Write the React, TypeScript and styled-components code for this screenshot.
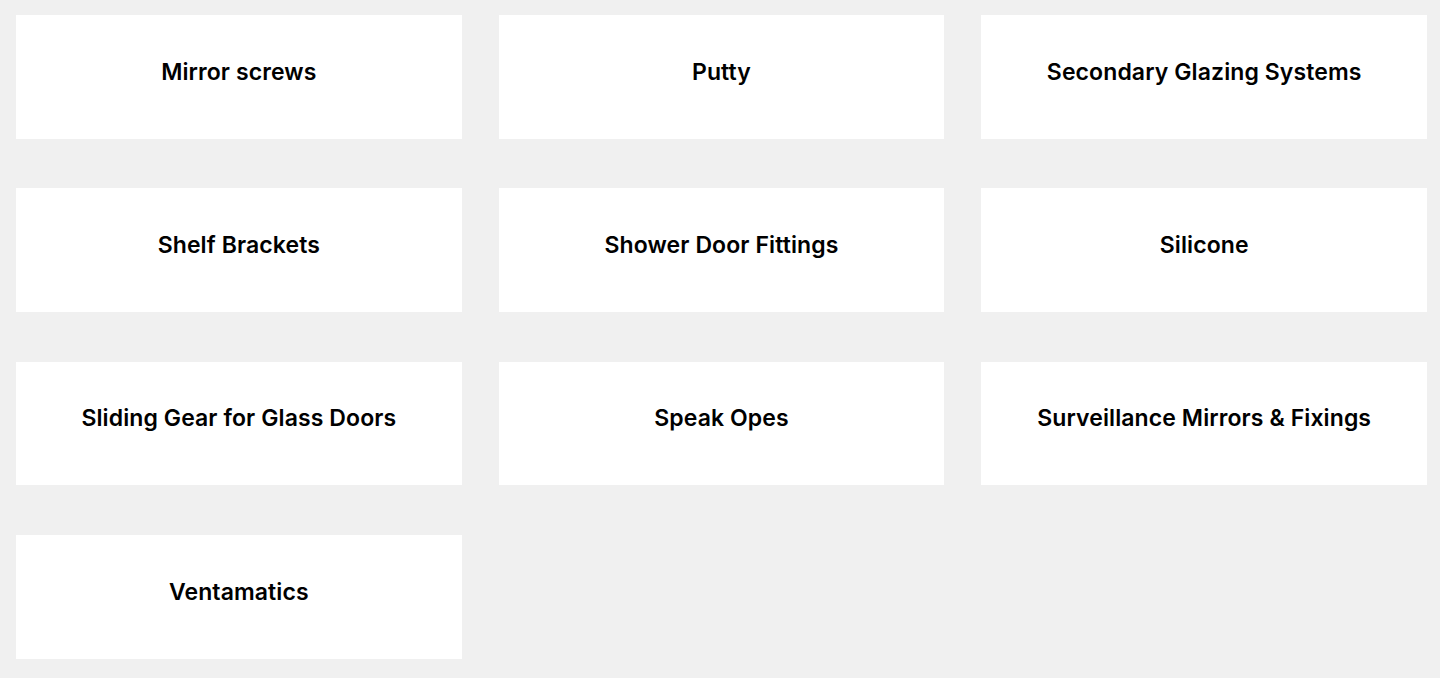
import React from "react";
import styled, { createGlobalStyle } from "styled-components";

const Global = createGlobalStyle`
  html, body { margin: 0; padding: 0; background: #f0f0f0; }
  body { font-family: "Inter", "Liberation Sans", sans-serif; }
`;

const Grid = styled.div`
  display: grid;
  grid-template-columns: repeat(3, 445.6px);
  column-gap: 37.1px;
  row-gap: 49.6px;
  padding: 15px 0 0 16px;
`;

const Card = styled.a`
  display: flex;
  align-items: center;
  justify-content: center;
  height: 123.7px;
  box-sizing: border-box;
  padding-bottom: 10px;
  background: #ffffff;
  color: #000000;
  text-decoration: none;
  font-family: "Inter", "Liberation Sans", sans-serif;
  font-weight: 600;
  font-size: 23px;
  letter-spacing: 0.1px;
`;

const items = [
  "Mirror screws",
  "Putty",
  "Secondary Glazing Systems",
  "Shelf Brackets",
  "Shower Door Fittings",
  "Silicone",
  "Sliding Gear for Glass Doors",
  "Speak Opes",
  "Surveillance Mirrors & Fixings",
  "Ventamatics",
];

export default function App() {
  return (
    <>
      <Global />
      <Grid>
        {items.map((t) => (
          <Card key={t} href="#">
            {t}
          </Card>
        ))}
      </Grid>
    </>
  );
}
